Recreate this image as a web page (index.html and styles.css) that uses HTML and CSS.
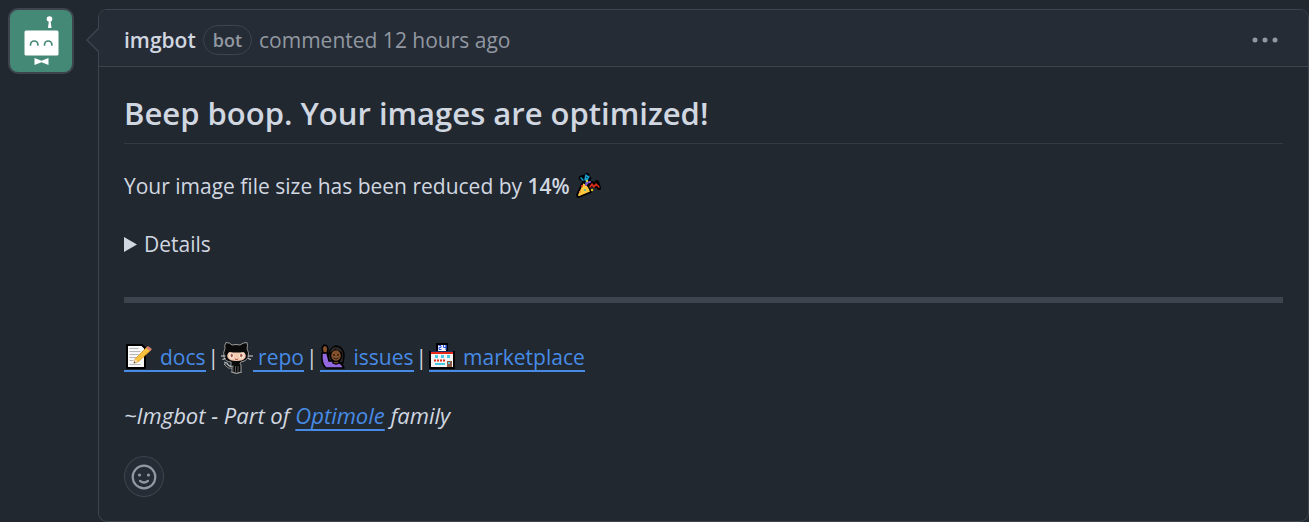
FILE: index.html
```html
<!DOCTYPE html>
<html lang="en">
<head>
<meta charset="utf-8">
<meta name="viewport" content="width=device-width, initial-scale=1">
<title>imgbot comment</title>
<link rel="stylesheet" href="styles.css">
</head>
<body>
<main class="timeline">
  <svg class="avatar" viewBox="0 0 66 66" role="img" aria-label="imgbot avatar">
    <rect x="1" y="1" width="64" height="64" rx="9" fill="#448876" stroke="#3d444d" stroke-width="2"/>
    <g fill="#fff">
      <circle cx="41.500" cy="11" r="2.800"/>
      <path d="M41 12h1.500l1 8h-3.500z"/>
      <rect x="16.500" y="22.500" width="34" height="25" rx="1.500"/>
      <path d="M26.500 50l7 2.700 7-2.700v7l-7-2.700-7 2.700z"/>
    </g>
    <path d="M22.500 37a3.700 4 0 0 1 7.400 0M36.500 37a3.700 4 0 0 1 7.400 0" fill="none" stroke="#448876" stroke-width="1.700" stroke-linecap="round"/>
  </svg>
  <article class="comment">
    <svg class="caret" viewBox="0 0 13 26" aria-hidden="true">
      <path d="M13 1L1 13 13 25" fill="#262c36" stroke="#3d444d" stroke-width="1.500"/>
    </svg>
    <header class="comment-header">
      <strong class="author">imgbot</strong>
      <span class="label">bot</span>
      <span class="when">commented 12 hours ago</span>
      <button class="menu" type="button" aria-label="Show options">
        <svg width="28" height="8" viewBox="0 0 28 8" fill="#9198a1" aria-hidden="true"><circle cx="4" cy="4" r="2.500"/><circle cx="14" cy="4" r="2.500"/><circle cx="24" cy="4" r="2.500"/></svg>
      </button>
    </header>
    <div class="comment-body">
      <h2 class="title">Beep boop. Your images are optimized!</h2>
      <p class="text">Your image file size has been reduced by <strong class="percent">14%</strong>
        <svg class="emoji party" viewBox="0 0 26 26" role="img" aria-label="Party popper">
          <g stroke-linejoin="round" stroke-linecap="round">
            <path d="M6 6l3-1 1 3M12 3l-2 4 4-1-2 5" fill="none" stroke="#000" stroke-width="4.500"/>
            <path d="M14 15l3-4 3 3 2-4 2 6" fill="none" stroke="#000" stroke-width="4"/>
            <path d="M8 10L2 23q0 2 2 2l12-5q-2-7-8-10z" fill="#ffc83d" stroke="#000" stroke-width="1.800"/>
            <path d="M6 6l2 2M11 3l-1 5 3-2-2 5M14 5l-2-1" fill="none" stroke="#199fd0" stroke-width="1.600"/>
            <path d="M15 15l2-3 2 3 2-3 3 3" fill="none" stroke="#d82b18" stroke-width="1.600"/>
            <path d="M11 13q1-3 4-3" fill="none" stroke="#8552c8" stroke-width="2"/>
          </g>
          <g><circle cx="12" cy="9" r="1" fill="#fff100"/><circle cx="17" cy="18" r="1.300" fill="#d4b820"/><circle cx="7" cy="14" r="1" fill="#f03a17"/><circle cx="10" cy="18" r="1" fill="#44b6b0"/><circle cx="5" cy="20" r="1" fill="#f7894a"/></g>
        </svg>
      </p>
      <details class="details">
        <summary class="summary"><svg class="marker" viewBox="0 0 13 15" aria-hidden="true"><path d="M0 0l13 7.500L0 15z" fill="#d1d7e0"/></svg>Details</summary>
        <p class="text">Optimized images are listed in the commit.</p>
      </details>
      <hr class="rule">
      <p class="text links">
        <a class="link" href="#docs"><svg class="emoji note" viewBox="0 0 28 26" aria-hidden="true">
          <path d="M3 2h15l3 3v20H3z" fill="#f7f7f7" stroke="#000" stroke-width="2" stroke-linejoin="round"/>
          <path d="M5.500 5.500h9M5.500 8.500h11M5.500 11.500h9M5.500 14.500h7M5.500 17.500h4M5.500 21.500h11" stroke="#b8b8b8"/>
          <path d="M10 20l1-4L23 4l4 3-13 12z" fill="#f8c23d" stroke="#d58a18" stroke-width=".7"/>
          <path d="M22 5l2-2 4 3-2 2z" fill="#d67d73"/><path d="M10 20l1-4 3 3z" fill="#f5d9b8"/><path d="M9.500 20.500l1-2 1 1z" fill="#333"/>
        </svg>docs</a>
        <span class="bar">|</span>
        <a class="link octo" href="#repo"><svg class="emoji octocat" viewBox="0 0 32 34" aria-hidden="true">
          <path d="M5 1.500q4 0 6 2.500 4-1 8 0 3-2.500 7-2.500 1 3 0 6 2.500 4 1 9-2 4-7 4.500-2 1 0 3v7q-4.500 2.500-9 0v-4q-4 1-6-2l-2-2q2-1 4 1l3 1v-4q-6-.5-7-5-1-5 1-8.500-1-3 1-6z" fill="#0b0a0a" stroke="#bbb" stroke-width=".8"/>
          <path d="M8.500 11q7 1 14 0 3 2 2 5.500-2 3.500-9 3.500t-9-3.500q-1-3.500 2-5.500z" fill="#f4cbb2"/>
          <ellipse cx="10.500" cy="14.500" rx="2" ry="2.700" fill="#fff"/><ellipse cx="20.500" cy="14.500" rx="2" ry="2.700" fill="#fff"/>
          <ellipse cx="10.700" cy="14.500" rx="1.200" ry="2" fill="#a75c45"/><ellipse cx="20.300" cy="14.500" rx="1.200" ry="2" fill="#a75c45"/>
          <path d="M14 18q1.500 1 3 0" fill="none" stroke="#9b4a3a"/>
          <path d="M0 15h4.500M27 15h5M1.500 18.500l3-1M27 17.500l3 1" stroke="#d8d8d8" stroke-width="1.200"/>
          <path d="M12 24v7M14.500 25v8M17 25v8M19.500 24v7" stroke="#555" stroke-width="1"/><path d="M10 31q5.500 3 11 0" fill="none" stroke="#999"/>
          <path d="M3 21l3 1 2 3 4 1" fill="none" stroke="#a8b7bc" stroke-width="1.200"/>
        </svg><span class="link-text">repo</span></a>
        <span class="bar">|</span>
        <a class="link" href="#issues"><svg class="emoji hand" viewBox="0 0 26 26" aria-hidden="true">
          <g stroke="#000" stroke-width="1.500" stroke-linejoin="round">
            <path d="M3 10l-1-5 2-3 3 1 1 3-1 5z" fill="#84502d"/>
            <path d="M8 20Q7 6 16 3q8 1 8 10l-1 7z" fill="#2b2523"/>
            <path d="M2 10h5l2 8q12-1 15 7H6Q1 21 2 10z" fill="#9367df"/>
            <path d="M13 17h6v3q-3 2-6 0z" fill="#84502d"/>
            <ellipse cx="16" cy="12.500" rx="5.500" ry="6" fill="#85502c"/>
          </g>
          <path d="M10 9q4 0 5-3 3 3 7 3-1-5-6-5-5 0-6 5z" fill="#2b2523"/><circle cx="14" cy="12" r=".8"/><circle cx="18" cy="12" r=".8"/><path d="M13.500 15q2.500 2 5 0" fill="none" stroke="#222"/>
        </svg>issues</a>
        <span class="bar">|</span>
        <a class="link" href="#marketplace"><svg class="emoji store" viewBox="0 0 26 26" aria-hidden="true">
          <path d="M1 9h7V1h10v8h7v16H1z" fill="#f3f3f3" stroke="#000" stroke-width="2"/>
          <path d="M2 9h22v2H2z" fill="#e42a17"/><path d="M2 8h22v1H2z" fill="#1d2d66"/>
          <path d="M9.500 2.500h2.500v2H10v2h2.500M14.500 2v2.500H17V2v5" fill="none" stroke="#2856e0" stroke-width="1"/>
          <path d="M6 12h3v3H6zM12 12h3v3h-3zM18 12h3v3h-3zM6 20h10v2H6z" fill="#48cae5"/>
          <path d="M5 17.500h12" stroke="#e42a17" stroke-width="2" stroke-dasharray="2 1"/>
          <path d="M18 18h5v6h-5z" fill="#8a5a43"/><path d="M19 19h2v2h-2z" fill="#58c6dc"/>
        </svg>marketplace</a>
      </p>
      <p class="text family">~Imgbot - Part of <a class="link" href="#optimole">Optimole</a> family</p>
      <button class="reaction" type="button" aria-label="Add your reaction">
        <svg width="26" height="26" viewBox="0 0 26 26" fill="none" stroke="#9198a1" stroke-width="2.200" stroke-linecap="round" aria-hidden="true">
          <circle cx="13" cy="13" r="11.300"/><path d="M9 16.800q4 3.400 8 0"/><circle cx="8.500" cy="11" r="1.600" fill="#9198a1" stroke="none"/><circle cx="17.500" cy="11" r="1.600" fill="#9198a1" stroke="none"/>
        </svg>
      </button>
    </div>
  </article>
</main>
</body>
</html>
```

FILE: styles.css
```css
* { box-sizing: border-box; }
body {
  margin: 0;
  background: #212830;
  color: #d1d7e0;
  font-family: "Open Sans", "Noto Sans", sans-serif;
  font-size: 21px;
  line-height: 34px;
}
.timeline {
  display: flex;
  align-items: flex-start;
  gap: 24px;
  padding: 8px 0 0 8px;
}
.avatar { flex: none; width: 66px; height: 66px; }
.comment {
  position: relative;
  flex: 1;
  min-width: 0;
  margin-top: 1px;
  border: 1px solid #3d444d;
  border-radius: 9px;
}
.caret {
  position: absolute;
  top: 17px;
  left: -13px;
  width: 13px;
  height: 26px;
}
.comment-header {
  display: flex;
  align-items: center;
  gap: 7px;
  height: 57px;
  padding: 3px 25px 0;
  background: #262c36;
  border-bottom: 1px solid #3d444d;
  border-radius: 8px 8px 0 0;
}
.author { font-weight: 600; }
.label {
  padding: 0 9px;
  border: 1px solid #3d444d;
  border-radius: 15px;
  color: #9198a1;
  font-size: 18px;
  font-weight: 600;
  line-height: 28px;
}
.when { color: #9198a1; }
.menu {
  display: flex;
  margin-left: auto;
  padding: 8px 4px;
  border: 0;
  background: none;
}
.comment-body { padding: 25px 25px 24px; }
.title {
  margin: 0 0 25px;
  padding-bottom: 8px;
  border-bottom: 1px solid #343b44;
  font-size: 31px;
  font-weight: 600;
  line-height: 43px;
}
.text { margin: 0 0 24px; }
.percent { font-weight: 600; }
.emoji {
  width: 26px;
  height: 26px;
  margin-right: 8px;
  vertical-align: -4px;
}
.party { margin: 0; }
.note { width: 28px; }
.octocat {
  width: 32px;
  height: 34px;
  margin: -4px 0;
  vertical-align: -6px;
}
.summary {
  display: flex;
  align-items: center;
  gap: 7px;
  list-style: none;
}
.marker { width: 13px; height: 15px; }
.rule {
  height: 6px;
  margin: 36px 0 37px;
  border: 0;
  background: #3d444d;
}
.link {
  border-bottom: 2px solid #478be6;
  color: #478be6;
  text-decoration: none;
}
.links { display: flex; gap: 2px; }
.links .link { height: 32px; white-space: nowrap; }
.links .octo { border-bottom: 0; }
.link-text {
  display: inline-block;
  height: 32px;
  padding-left: 5px;
  border-bottom: 2px solid #478be6;
}
.family { font-size: 22px; font-style: italic; }
.family .link {
  border-bottom: 0;
  text-decoration: underline 2px;
  text-underline-offset: 5px;
  text-decoration-skip-ink: none;
}
.reaction {
  display: flex;
  align-items: center;
  justify-content: center;
  width: 40px;
  height: 41px;
  padding: 0;
  border: 1px solid #3d444d;
  border-radius: 50%;
  background: #262c36;
}
```
